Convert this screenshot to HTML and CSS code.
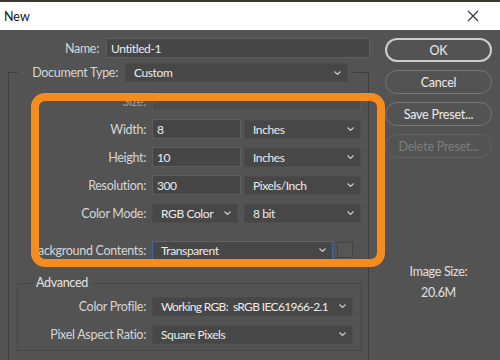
FILE: index.html
```html
<!DOCTYPE html>
<html lang="en">
<head>
    <meta charset="UTF-8">
    <title>New</title>
    <link rel="stylesheet" href="styles.css">
</head>
<body>

    <!-- Title bar -->
    <div class="titlebar">
        <span class="title">New</span>
        <svg class="close" width="12" height="12" viewBox="0 0 12 12">
            <path d="M1 1 L11 11 M11 1 L1 11" stroke="#333" stroke-width="1.1" fill="none"/>
        </svg>
    </div>

    <div class="dialog">
        <div class="main">
            <div class="name-row">
                <span class="label name-label">Name:</span>
                <div class="input name-input">Untitled-1</div>
            </div>

            <fieldset class="group">
                <legend class="doc-legend">
                    <span class="label doc-label">Document Type:</span>
                    <div class="select doc-select">
                        <span>Custom</span>
                        <svg class="chev" width="7" height="4" viewBox="0 0 7 4"><path d="M0.5 0.5 L3.5 3.5 L6.5 0.5" stroke="#cfcfcf" stroke-width="1.1" fill="none"/></svg>
                    </div>
                </legend>

                <div class="rows">
                    <div class="field-row first">
                        <span class="label dim">Size:</span>
                        <div class="select size-select disabled"></div>
                    </div>
                    <div class="field-row">
                        <span class="label">Width:</span>
                        <div class="input num">8</div>
                        <div class="select unit">
                            <span>Inches</span>
                            <svg class="chev" width="7" height="4" viewBox="0 0 7 4"><path d="M0.5 0.5 L3.5 3.5 L6.5 0.5" stroke="#cfcfcf" stroke-width="1.1" fill="none"/></svg>
                        </div>
                    </div>
                    <div class="field-row">
                        <span class="label">Height:</span>
                        <div class="input num">10</div>
                        <div class="select unit">
                            <span>Inches</span>
                            <svg class="chev" width="7" height="4" viewBox="0 0 7 4"><path d="M0.5 0.5 L3.5 3.5 L6.5 0.5" stroke="#cfcfcf" stroke-width="1.1" fill="none"/></svg>
                        </div>
                    </div>
                    <div class="field-row">
                        <span class="label">Resolution:</span>
                        <div class="input num">300</div>
                        <div class="select unit">
                            <span>Pixels/Inch</span>
                            <svg class="chev" width="7" height="4" viewBox="0 0 7 4"><path d="M0.5 0.5 L3.5 3.5 L6.5 0.5" stroke="#cfcfcf" stroke-width="1.1" fill="none"/></svg>
                        </div>
                    </div>
                    <div class="field-row">
                        <span class="label">Color Mode:</span>
                        <div class="select mode">
                            <span>RGB Color</span>
                            <svg class="chev" width="7" height="4" viewBox="0 0 7 4"><path d="M0.5 0.5 L3.5 3.5 L6.5 0.5" stroke="#cfcfcf" stroke-width="1.1" fill="none"/></svg>
                        </div>
                        <div class="select unit bits">
                            <span>8 bit</span>
                            <svg class="chev" width="7" height="4" viewBox="0 0 7 4"><path d="M0.5 0.5 L3.5 3.5 L6.5 0.5" stroke="#cfcfcf" stroke-width="1.1" fill="none"/></svg>
                        </div>
                    </div>
                    <div class="field-row bg-row">
                        <span class="label">Background Contents:</span>
                        <div class="select bg-select">
                            <span>Transparent</span>
                            <svg class="chev" width="7" height="4" viewBox="0 0 7 4"><path d="M0.5 0.5 L3.5 3.5 L6.5 0.5" stroke="#cfcfcf" stroke-width="1.1" fill="none"/></svg>
                        </div>
                        <div class="swatch"></div>
                    </div>
                </div>

                <fieldset class="advanced">
                    <legend class="adv-legend">Advanced</legend>
                    <div class="field-row first">
                        <span class="label">Color Profile:</span>
                        <div class="select profile">
                            <span class="profile-text">Working RGB:&nbsp; sRGB IEC61966-2.1</span>
                            <svg class="chev" width="7" height="4" viewBox="0 0 7 4"><path d="M0.5 0.5 L3.5 3.5 L6.5 0.5" stroke="#cfcfcf" stroke-width="1.1" fill="none"/></svg>
                        </div>
                    </div>
                    <div class="field-row">
                        <span class="label">Pixel Aspect Ratio:</span>
                        <div class="select profile">
                            <span>Square Pixels</span>
                            <svg class="chev" width="7" height="4" viewBox="0 0 7 4"><path d="M0.5 0.5 L3.5 3.5 L6.5 0.5" stroke="#cfcfcf" stroke-width="1.1" fill="none"/></svg>
                        </div>
                    </div>
                </fieldset>
            </fieldset>
        </div>

        <!-- Buttons -->
        <div class="side">
            <button class="btn default">OK</button>
            <button class="btn">Cancel</button>
            <button class="btn">Save Preset...</button>
            <button class="btn disabled">Delete Preset...</button>
            <div class="image-size">
                <div>Image Size:</div>
                <div class="size-value">20.6M</div>
            </div>
        </div>

        <!-- Orange annotation box -->
        <div class="highlight"></div>
    </div>

</body>
</html>
```

FILE: styles.css
```css
/* Global Styles */
body {
    margin: 0;
    background-color: #535353;
    font-family: 'Lato', 'Liberation Sans', sans-serif;
    font-size: 12.5px;
    letter-spacing: -0.3px;
    color: #e8e8e8;
}

.titlebar {
    height: 28px;
    border-top: 2px solid #3b392f;
    background-color: #fff;
    display: flex;
    align-items: center;
    justify-content: space-between;
    padding: 0 21px 0 4px;
}

.title {
    color: #111;
    font-size: 12.5px;
    letter-spacing: 0;
}

.dialog {
    position: relative;
    display: flex;
}

.main {
    width: 370px;
    padding-top: 8px;
}

.label {
    color: #d6d6d6;
    text-align: right;
    white-space: nowrap;
}

.label.dim {
    color: #9a9a9a;
}

.input,
.select {
    box-sizing: border-box;
    height: 20px;
    display: flex;
    align-items: center;
    justify-content: space-between;
    padding: 0 6px 0 4px;
    background-color: #464646;
    border: 1px solid #5e5e5e;
    color: #ececec;
    font-size: 12px;
    letter-spacing: -0.4px;
    white-space: nowrap;
}

.select {
    background-color: #474747;
    border-color: #4c4c4c;
    height: 19px;
    padding-left: 8px;
}

.select.disabled {
    background-color: #4d4d4d;
    border-color: #585858;
}

.name-row {
    display: flex;
    align-items: center;
    gap: 7px;
}

.name-label {
    width: 99px;
}

.name-input {
    width: 264px;
}

/* Document type group */
.group {
    box-sizing: border-box;
    width: 361px;
    min-width: 0;
    margin: 5px 0 0 8px;
    padding: 0;
    border: 1px solid #3f3f3f;
}

.doc-legend {
    display: flex;
    align-items: center;
    gap: 7px;
    margin-left: 9px;
    padding: 0 5px 0 2px;
}

.doc-label {
    width: 98px;
}

.doc-select {
    width: 223px;
}

.rows {
    padding-top: 9px;
}

.field-row {
    display: flex;
    align-items: center;
    height: 20px;
    margin-top: 8px;
}

.field-row.first {
    margin-top: 0;
}

.field-row .label {
    width: 137px;
    margin-right: 6px;
}

.size-select {
    width: 209px;
    height: 20px;
}

.num {
    width: 89px;
    margin-right: 3px;
}

.unit {
    width: 117px;
}

.mode {
    width: 86px;
    margin-right: 6px;
}

.bg-row {
    margin-top: 17px;
}

.bg-select {
    width: 181px;
    border-color: #3b6aa0;
}

.swatch {
    box-sizing: border-box;
    width: 16px;
    height: 16px;
    margin-left: 4px;
    border: 1px solid #444;
    background-color: #565656;
}

/* Advanced group */
.advanced {
    box-sizing: border-box;
    width: 345px;
    min-width: 0;
    margin: 15px 0 9px 8px;
    padding: 5px 0 6px 0;
    border: 1px solid #474747;
}

.adv-legend {
    margin-left: 15px;
    padding: 0 3px;
    line-height: 16px;
    font-size: 12.5px;
    color: #e4e4e4;
}

.advanced .field-row .label {
    width: 128px;
}

.profile {
    width: 201px;
}

.profile-text {
    letter-spacing: -0.65px;
}

/* Right column */
.side {
    width: 107px;
    margin-left: 15px;
    padding-top: 8px;
    display: flex;
    flex-direction: column;
    gap: 8px;
}

.btn {
    box-sizing: border-box;
    height: 24px;
    width: 107px;
    border-radius: 12px;
    border: 1px solid #777;
    background-color: #535353;
    color: #ececec;
    font-family: inherit;
    font-size: 12.5px;
    letter-spacing: -0.2px;
    padding: 0;
}

.btn.default {
    border: 2px solid #cdcdcd;
}

.btn.disabled {
    border-color: #626262;
    color: #7d7d7d;
}

.image-size {
    margin-top: 98px;
    text-align: center;
    line-height: 16px;
    color: #e0e0e0;
}

.size-value {
    margin-top: 5px;
}

.highlight {
    position: absolute;
    left: 31px;
    top: 63px;
    width: 338px;
    height: 158px;
    border: 8px solid #f78c1e;
    border-radius: 14px;
    pointer-events: none;
}
```
